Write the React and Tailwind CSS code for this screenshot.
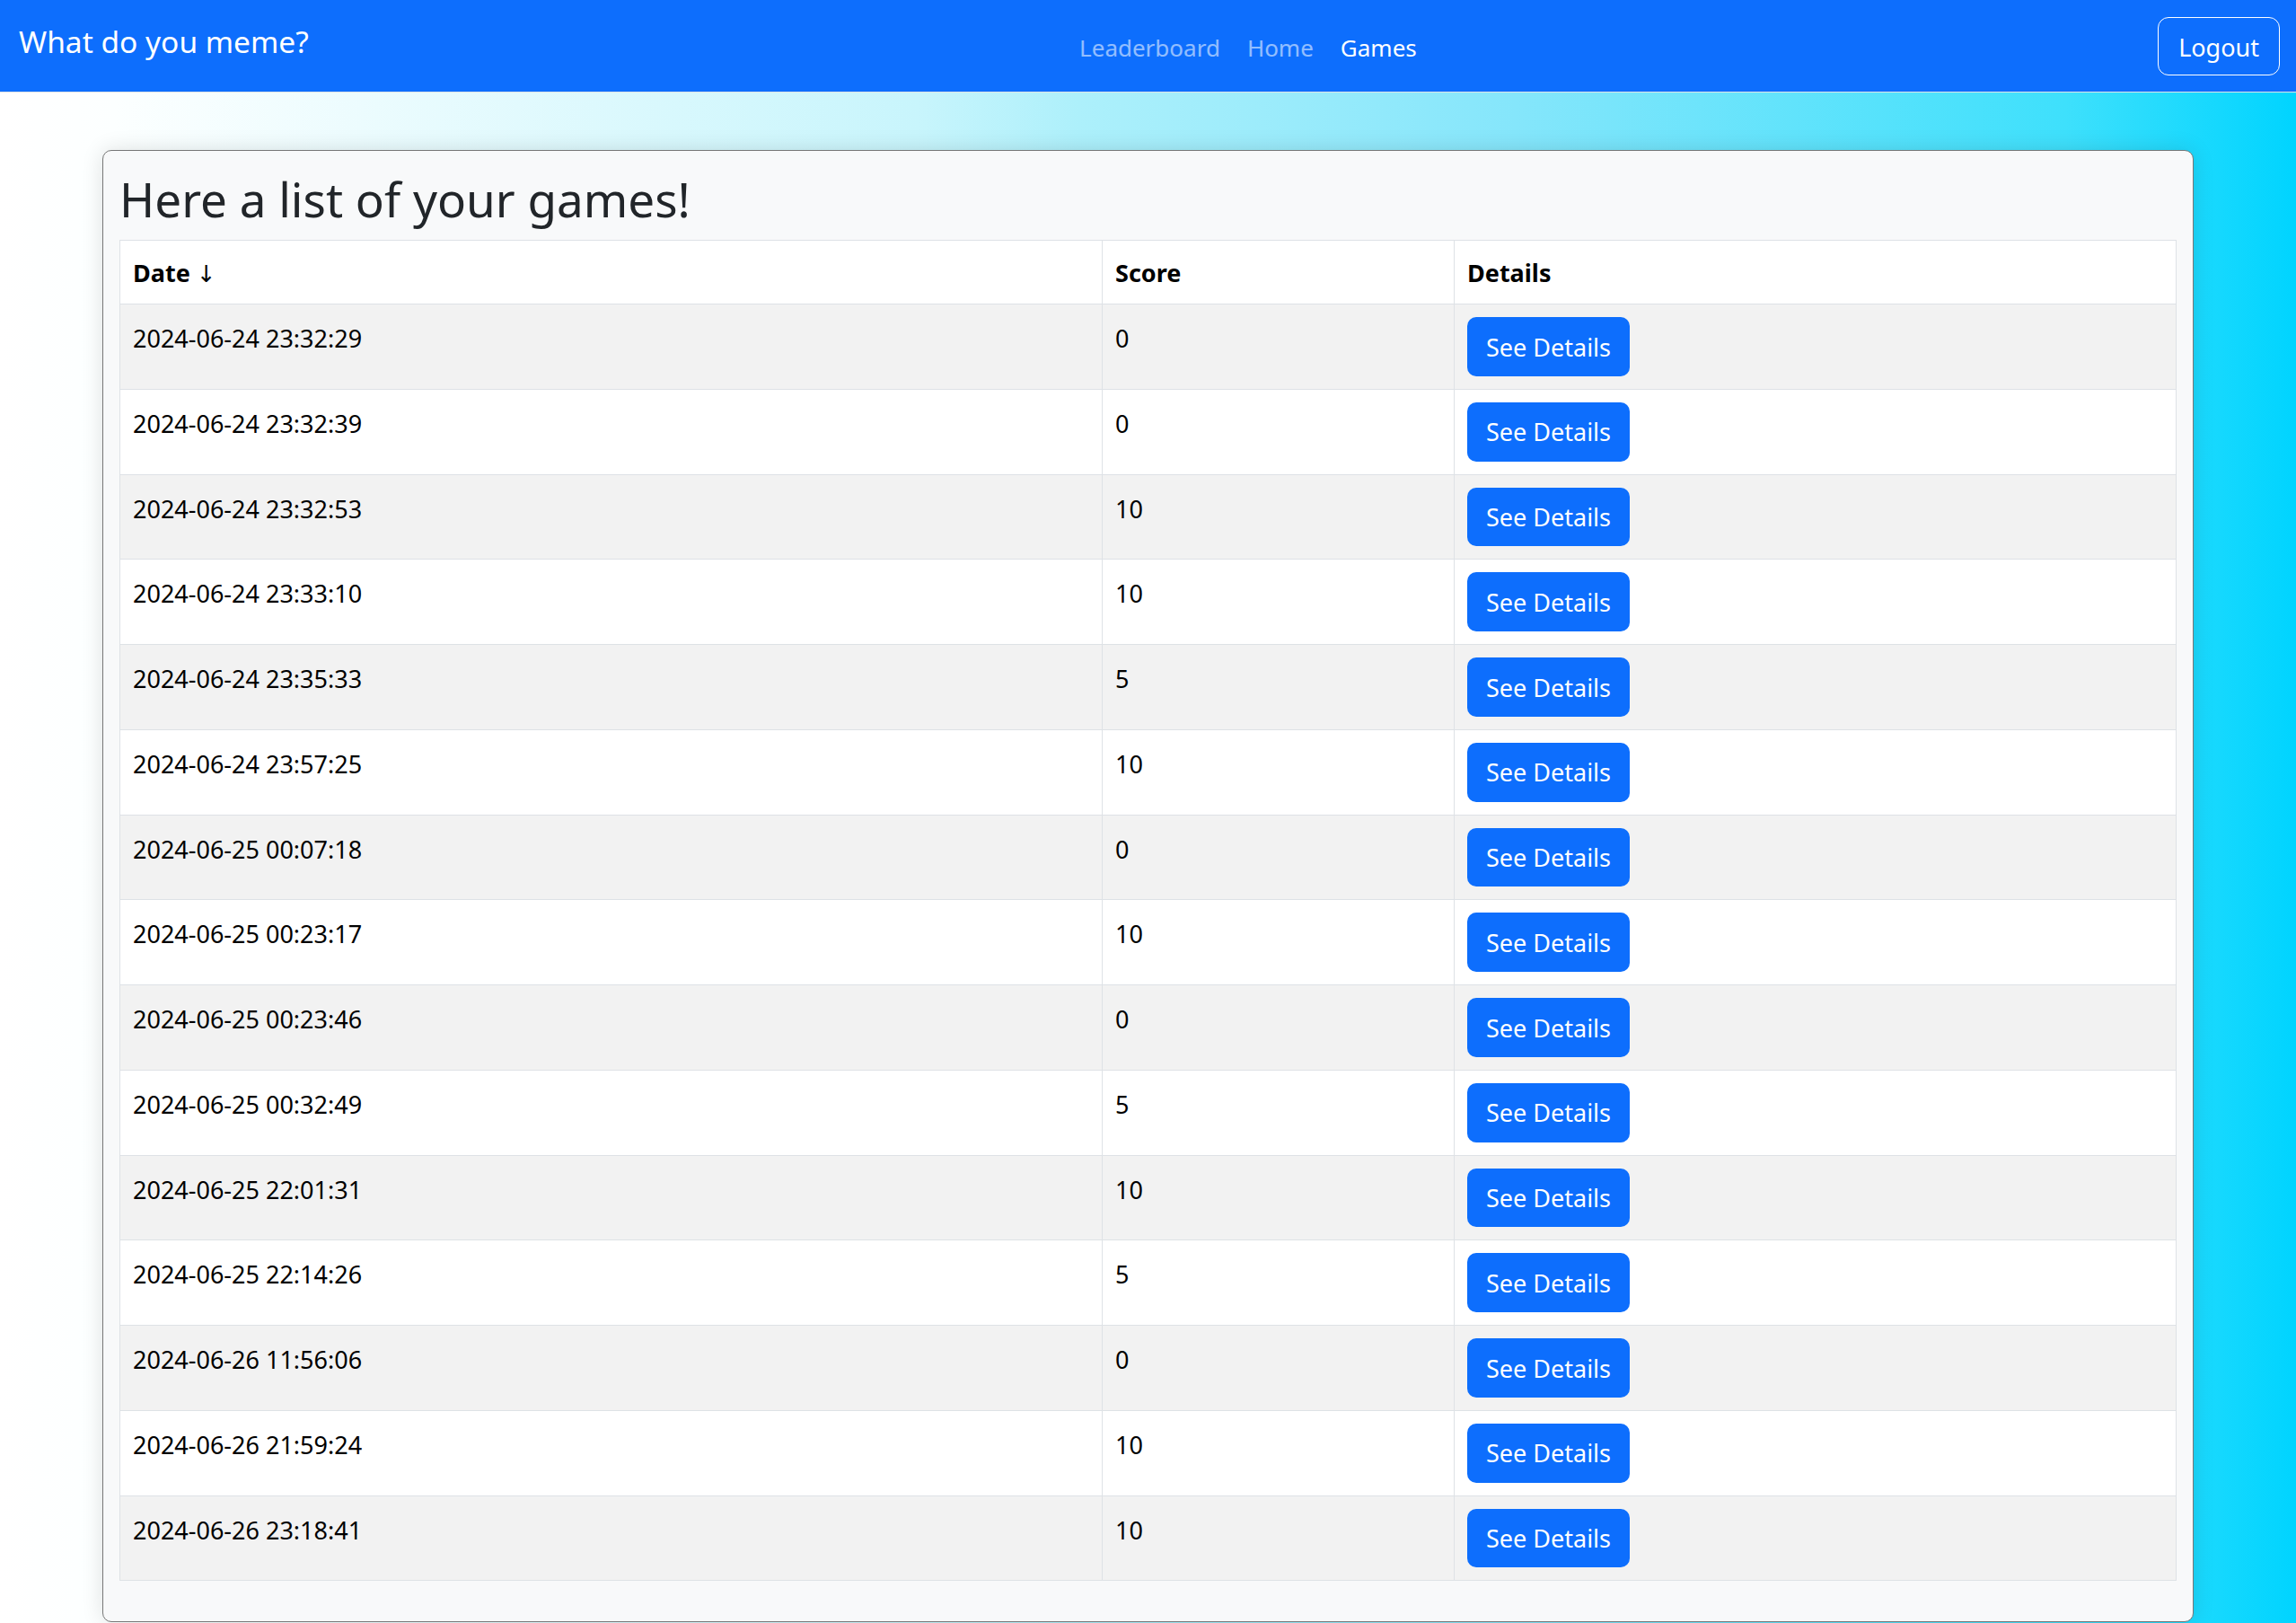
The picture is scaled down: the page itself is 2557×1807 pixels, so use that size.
const games = [
  ['2024-06-24 23:32:29', 0],
  ['2024-06-24 23:32:39', 0],
  ['2024-06-24 23:32:53', 10],
  ['2024-06-24 23:33:10', 10],
  ['2024-06-24 23:35:33', 5],
  ['2024-06-24 23:57:25', 10],
  ['2024-06-25 00:07:18', 0],
  ['2024-06-25 00:23:17', 10],
  ['2024-06-25 00:23:46', 0],
  ['2024-06-25 00:32:49', 5],
  ['2024-06-25 22:01:31', 10],
  ['2024-06-25 22:14:26', 5],
  ['2024-06-26 11:56:06', 0],
  ['2024-06-26 21:59:24', 10],
  ['2024-06-26 23:18:41', 10],
];

function NavBar() {
  return (
    <nav className="h-[103px] bg-[#0d6efd] border-b border-[#dee2e6] flex items-center pl-[21px] pr-[18px]">
      <a className="text-white text-[33.5px] leading-[51px] mb-[10px] mr-[27px]">What do you meme?</a>
      <div className="flex-1 flex justify-center mt-[3px] pl-[6px]">
        <a className="px-[15px] text-[26px] leading-[40px] text-white/55">Leaderboard</a>
        <a className="px-[15px] text-[26px] leading-[40px] text-white/55">Home</a>
        <a className="px-[15px] text-[26px] leading-[40px] text-white">Games</a>
      </div>
      <button className="h-[65px] px-[22px] pt-[3px] rounded-[12px] border border-white text-white text-[27px] leading-[40px]">
        Logout
      </button>
    </nav>
  );
}

export default function App() {
  return (
    <div className="min-h-[1807px] font-['Noto_Sans',sans-serif] bg-[linear-gradient(90deg,#ffffff_0%,#fcffff_5%,#c8f5fc_40%,#adf0fb_47%,#85e6fb_66%,#3ee0fc_90%,#00d4ff_100%)]">
      <NavBar />
      <div className="mx-auto mt-[64px] w-[2329px] rounded-[10px] border border-[#777777] bg-[#f8f9fa] px-[18px] pt-[20px] pb-[45px] shadow-[0_0_24px_rgba(0,0,0,0.12)]">
        <h2 className="text-[53px] leading-[67px] text-[#212529] mb-[12px]">Here a list of your games!</h2>
        <table className="w-full border-collapse bg-white text-black">
          <thead>
            <tr>
              <th className="w-[1094px] border border-[#dee2e6] px-[14px] pt-[14px] pb-[13px] text-left font-bold text-[27px] leading-[43px]">
                Date <span className="font-['DejaVu_Sans',sans-serif] font-normal text-[26px] leading-none">↓</span>
              </th>
              <th className="w-[392px] border border-[#dee2e6] px-[14px] pt-[14px] pb-[13px] text-left font-bold text-[27px] leading-[43px]">Score</th>
              <th className="border border-[#dee2e6] px-[14px] pt-[14px] pb-[13px] text-left font-bold text-[27px] leading-[43px]">Details</th>
            </tr>
          </thead>
          <tbody>
            {games.map(([date, score], i) => (
              <tr key={date} className={i % 2 === 0 ? 'bg-[#f2f2f2]' : 'bg-white'}>
                <td className="border border-[#dee2e6] px-[14px] py-[14px] align-top text-[27px] leading-[47px]">{date}</td>
                <td className="border border-[#dee2e6] px-[14px] py-[14px] align-top text-[27px] leading-[47px]">{score}</td>
                <td className="border border-[#dee2e6] px-[14px] py-[14px] align-top">
                  <button className="flex h-[65.75px] items-center rounded-[10px] bg-[#0d6efd] px-[21px] pt-[2px] text-[27px] text-white">
                    See Details
                  </button>
                </td>
              </tr>
            ))}
          </tbody>
        </table>
      </div>
    </div>
  );
}
